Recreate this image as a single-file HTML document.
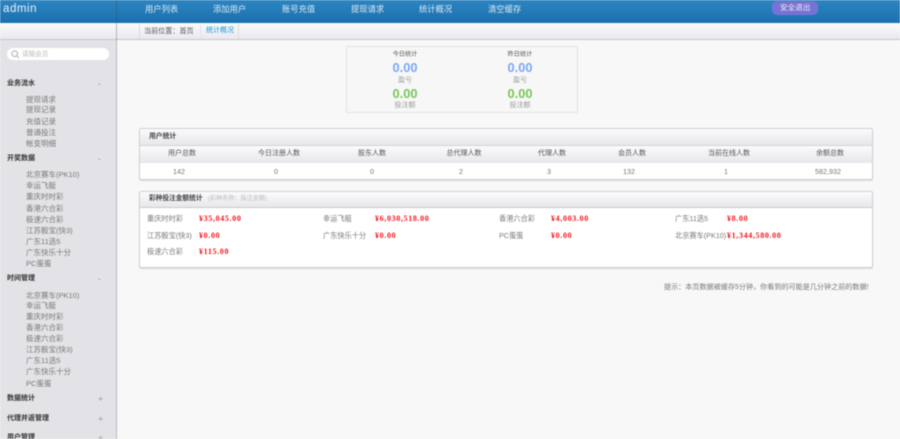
<!DOCTYPE html>
<html lang="zh"><head><meta charset="utf-8"><title>admin</title>
<style>
*{margin:0;padding:0;box-sizing:border-box}
html,body{width:900px;height:439px;overflow:hidden;background:#f8f8f8}
body{position:relative;font-family:"Liberation Sans","Noto Sans CJK SC",sans-serif;color:#666}
#r{position:absolute;left:0;top:0;width:900px;height:439px;overflow:hidden;filter:blur(.45px)}
.a{position:absolute;white-space:nowrap}
.t{position:absolute;white-space:nowrap;height:12px;line-height:12px}
.top{left:0;top:0;width:900px;height:23px;background:linear-gradient(#2c85c1,#1b70ae)}
.sub{left:0;top:23px;width:900px;height:17px;background:linear-gradient(#fbfbfc,#e9e9ee);border-bottom:1px solid #c6c4cc}
.side{left:0;top:40px;width:116px;height:399px;background:#e3e3e7}
.vl{left:116px;top:0;width:1px;height:439px;background:rgba(60,70,90,.35)}
.n{font-size:8.3px;color:#dbe9f4;top:3px}
.g{font-size:7px;font-weight:bold;color:#333;left:7px}
.i{font-size:7.5px;color:#777;left:26px;margin-top:1px}
.p{font-size:9px;color:#999;left:98px}
.box{background:#fff;border:1px solid #cfcfd6;border-radius:2px;box-shadow:0 1px 1px rgba(0,0,0,.12)}
.hd{background:linear-gradient(#fbfbfc,#e7e7ec);border-bottom:1px solid #d2d2d8}
.th{font-size:7px;color:#555;transform:translateX(-50%)}
.td{font-size:7.2px;color:#777;transform:translateX(-50%)}
.l{font-size:7.2px;color:#777}
.m{font-size:8px;font-weight:bold;color:#f3141c;font-family:"Liberation Serif","Noto Serif CJK SC",serif;letter-spacing:.65px}
.big{font-size:12.8px;font-weight:bold;transform:translateX(-50%)}
.sm{font-size:7px;color:#999;transform:translateX(-50%)}
</style></head><body><div id="r">
<div class="a top"></div><div class="a sub"></div><div class="a side"></div><div class="a vl"></div>

<div class="t" style="left:3px;top:3px;font-size:11.5px;letter-spacing:.55px;color:#e8f1f8">admin</div>
<div class="t n" style="left:145px">用户列表</div>
<div class="t n" style="left:213px">添加用户</div>
<div class="t n" style="left:282px">账号充值</div>
<div class="t n" style="left:351px">提现请求</div>
<div class="t n" style="left:419px">统计概况</div>
<div class="t n" style="left:488px">清空缓存</div>
<div class="a" style="left:772px;top:1px;width:46px;height:14px;border-radius:5px;background:#7773d6"></div>
<div class="t" style="left:780px;top:2px;font-size:7.6px;color:#eee">安全退出</div>

<div class="a" style="left:139px;top:24px;width:100px;height:15px;background:linear-gradient(#fafafb,#e9e9ee);border-left:1px solid #ddd;border-right:1px solid #ddd"></div>
<div class="a" style="left:200px;top:24px;width:1px;height:15px;background:#e3e3e8"></div>
<div class="t" style="left:144px;top:25px;font-size:7.1px;color:#555">当前位置：首页</div>
<div class="t" style="left:206px;top:25px;font-size:7px;color:#1b9ad6">统计概况</div>

<div class="a" style="left:7px;top:48px;width:102px;height:12px;border-radius:6px;background:#fff"></div>
<svg class="a" style="left:10px;top:49px" width="10" height="10" viewBox="0 0 10 10"><circle cx="4.7" cy="4.7" r="2.8" fill="none" stroke="#bbb" stroke-width="1.2"/><path d="M7 7L9 9" stroke="#bbb" stroke-width="1.2"/></svg>
<div class="t" style="left:22px;top:49px;font-size:6.6px;color:#bbb">请输会员</div>

<div class="t g" style="top:78px">业务流水</div><div class="t p" style="top:78px">-</div>
<div class="t i" style="top:93px">提现请求</div>
<div class="t i" style="top:103px">提现记录</div>
<div class="t i" style="top:115px">充值记录</div>
<div class="t i" style="top:126px">普通投注</div>
<div class="t i" style="top:137px">帐变明细</div>

<div class="t g" style="top:153px">开奖数据</div><div class="t p" style="top:153px">-</div>
<div class="t i" style="top:168px">北京赛车(PK10)</div>
<div class="t i" style="top:179px">幸运飞艇</div>
<div class="t i" style="top:190px">重庆时时彩</div>
<div class="t i" style="top:202px">香港六合彩</div>
<div class="t i" style="top:213px">极速六合彩</div>
<div class="t i" style="top:224px">江苏骰宝(快3)</div>
<div class="t i" style="top:235px">广东11选5</div>
<div class="t i" style="top:246px">广东快乐十分</div>
<div class="t i" style="top:257px">PC蛋蛋</div>

<div class="t g" style="top:273px">时间管理</div><div class="t p" style="top:273px">-</div>
<div class="t i" style="top:289px">北京赛车(PK10)</div>
<div class="t i" style="top:299px">幸运飞艇</div>
<div class="t i" style="top:310px">重庆时时彩</div>
<div class="t i" style="top:321px">香港六合彩</div>
<div class="t i" style="top:332px">极速六合彩</div>
<div class="t i" style="top:343px">江苏骰宝(快3)</div>
<div class="t i" style="top:354px">广东11选5</div>
<div class="t i" style="top:365px">广东快乐十分</div>
<div class="t i" style="top:377px">PC蛋蛋</div>

<div class="t g" style="top:393px">数据统计</div><div class="t p" style="top:393px">+</div>
<div class="t g" style="top:413px">代理并返管理</div><div class="t p" style="top:413px">+</div>
<div class="t g" style="top:432px">用户管理</div><div class="t p" style="top:432px">+</div>

<div class="a" style="left:346px;top:46px;width:232px;height:67px;background:#f7f7f8;border:1px solid #e2e2e4;border-radius:2px"></div>
<div class="t" style="left:405px;top:49px;font-size:6.2px;color:#555;transform:translateX(-50%)">今日统计</div>
<div class="t" style="left:520px;top:49px;font-size:6.2px;color:#555;transform:translateX(-50%)">昨日统计</div>
<div class="t big" style="left:405px;top:62px;color:#7ba6f5">0.00</div>
<div class="t big" style="left:520px;top:62px;color:#7ba6f5">0.00</div>
<div class="t sm" style="left:405px;top:73px;margin-top:1.5px">盈亏</div>
<div class="t sm" style="left:520px;top:73px;margin-top:1.5px">盈亏</div>
<div class="t big" style="left:405px;top:88px;color:#79c654">0.00</div>
<div class="t big" style="left:520px;top:88px;color:#79c654">0.00</div>
<div class="t sm" style="left:405px;top:98px;margin-top:1.5px">投注额</div>
<div class="t sm" style="left:520px;top:98px;margin-top:1.5px">投注额</div>

<div class="a box" style="left:139px;top:128px;width:734px;height:52px"></div>
<div class="a hd" style="left:140px;top:129px;width:732px;height:17px"></div>
<div class="a hd" style="left:140px;top:146px;width:732px;height:17px;border-bottom:none"></div>
<div class="t" style="left:149px;top:131px;font-size:6.8px;font-weight:bold;color:#444">用户统计</div>
<div class="t th" style="left:182px;top:148px">用户总数</div>
<div class="t th" style="left:279px;top:148px">今日注册人数</div>
<div class="t th" style="left:372px;top:148px">股东人数</div>
<div class="t th" style="left:464px;top:148px">总代理人数</div>
<div class="t th" style="left:552px;top:148px">代理人数</div>
<div class="t th" style="left:632px;top:148px">会员人数</div>
<div class="t th" style="left:729px;top:148px">当前在线人数</div>
<div class="t th" style="left:830px;top:148px">余额总数</div>
<div class="t td" style="left:179px;top:166px">142</div>
<div class="t td" style="left:276px;top:166px">0</div>
<div class="t td" style="left:372px;top:166px">0</div>
<div class="t td" style="left:461px;top:166px">2</div>
<div class="t td" style="left:549px;top:166px">3</div>
<div class="t td" style="left:629px;top:166px">132</div>
<div class="t td" style="left:726px;top:166px">1</div>
<div class="t td" style="left:828px;top:166px">582,932</div>

<div class="a box" style="left:139px;top:191px;width:734px;height:77px"></div>
<div class="a hd" style="left:140px;top:192px;width:732px;height:16px;border-bottom-color:#c9c9d0"></div>
<div class="t" style="left:149px;top:193px;font-size:6.7px;font-weight:bold;color:#444">彩种投注金额统计</div>
<div class="t" style="left:208px;top:193px;font-size:6.1px;color:#bbb">(彩种名称：投注金额)</div>

<div class="t l" style="left:147px;top:213px">重庆时时彩</div><div class="t m" style="left:199px;top:213px">¥35,045.00</div>
<div class="t l" style="left:323px;top:213px">幸运飞艇</div><div class="t m" style="left:375px;top:213px">¥6,030,518.00</div>
<div class="t l" style="left:499px;top:213px">香港六合彩</div><div class="t m" style="left:551px;top:213px">¥4,003.00</div>
<div class="t l" style="left:675px;top:213px">广东11选5</div><div class="t m" style="left:727px;top:213px">¥8.00</div>
<div class="t l" style="left:147px;top:230px">江苏骰宝(快3)</div><div class="t m" style="left:199px;top:230px">¥0.00</div>
<div class="t l" style="left:323px;top:230px">广东快乐十分</div><div class="t m" style="left:375px;top:230px">¥0.00</div>
<div class="t l" style="left:499px;top:230px">PC蛋蛋</div><div class="t m" style="left:551px;top:230px">¥0.00</div>
<div class="t l" style="left:675px;top:230px">北京赛车(PK10)</div><div class="t m" style="left:727px;top:230px">¥1,344,580.00</div>
<div class="t l" style="left:147px;top:246px">极速六合彩</div><div class="t m" style="left:199px;top:246px">¥115.00</div>

<div class="t" style="left:664px;top:281px;font-size:7.1px;color:#777">提示：本页数据被缓存5分钟，你看到的可能是几分钟之前的数据!</div>
</div></body></html>
